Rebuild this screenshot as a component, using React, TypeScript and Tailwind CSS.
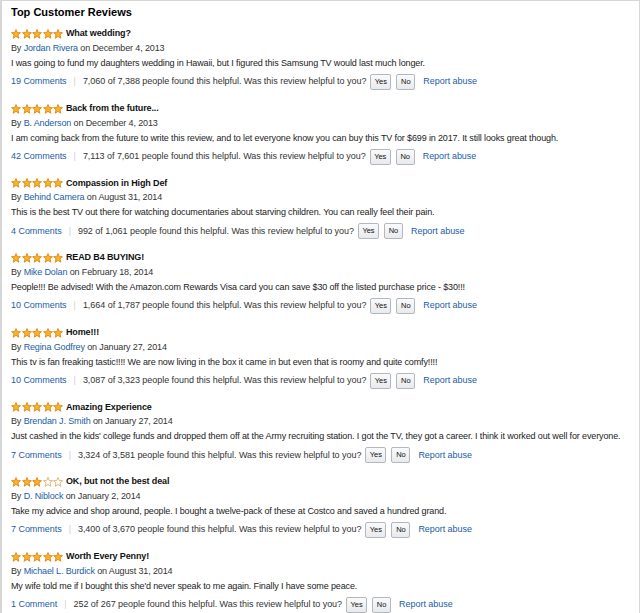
import React from "react";

const reviews = [
  {
    rating: 5,
    title: "What wedding?",
    author: "Jordan Rivera",
    date: "December 4, 2013",
    body: "I was going to fund my daughters wedding in Hawaii, but I figured this Samsung TV would last much longer.",
    comments: "19 Comments",
    helpful: "7,060 of 7,388",
  },
  {
    rating: 5,
    title: "Back from the future...",
    author: "B. Anderson",
    date: "December 4, 2013",
    body: "I am coming back from the future to write this review, and to let everyone know you can buy this TV for $699 in 2017. It still looks great though.",
    comments: "42 Comments",
    helpful: "7,113 of 7,601",
  },
  {
    rating: 5,
    title: "Compassion in High Def",
    author: "Behind Camera",
    date: "August 31, 2014",
    body: "This is the best TV out there for watching documentaries about starving children. You can really feel their pain.",
    comments: "4 Comments",
    helpful: "992 of 1,061",
  },
  {
    rating: 5,
    title: "READ B4 BUYING!",
    author: "Mike Dolan",
    date: "February 18, 2014",
    body: "People!!! Be advised! With the Amazon.com Rewards Visa card you can save $30 off the listed purchase price - $30!!!",
    comments: "10 Comments",
    helpful: "1,664 of 1,787",
  },
  {
    rating: 5,
    title: "Home!!!",
    author: "Regina Godfrey",
    date: "January 27, 2014",
    body: "This tv is fan freaking tastic!!!! We are now living in the box it came in but even that is roomy and quite comfy!!!!",
    comments: "10 Comments",
    helpful: "3,087 of 3,323",
  },
  {
    rating: 5,
    title: "Amazing Experience",
    author: "Brendan J. Smith",
    date: "January 27, 2014",
    body: "Just cashed in the kids' college funds and dropped them off at the Army recruiting station. I got the TV, they got a career. I think it worked out well for everyone.",
    comments: "7 Comments",
    helpful: "3,324 of 3,581",
  },
  {
    rating: 3,
    title: "OK, but not the best deal",
    author: "D. Niblock",
    date: "January 2, 2014",
    body: "Take my advice and shop around, people. I bought a twelve-pack of these at Costco and saved a hundred grand.",
    comments: "7 Comments",
    helpful: "3,400 of 3,670",
  },
  {
    rating: 5,
    title: "Worth Every Penny!",
    author: "Michael L. Burdick",
    date: "August 31, 2014",
    body: "My wife told me if I bought this she'd never speak to me again. Finally I have some peace.",
    comments: "1 Comment",
    helpful: "252 of 267",
  },
];

const Star = ({ filled }: { filled: boolean }) => (
  <svg width="10" height="10" viewBox="0 0 20 20" className="shrink-0">
    <polygon
      points="10,1 12.6,7 19,7.4 14,11.6 15.6,18.5 10,14.8 4.4,18.5 6,11.6 1,7.4 7.4,7"
      fill={filled ? "#fbb226" : "#ffffff"}
      stroke={filled ? "#d9820c" : "#d7a65a"}
      strokeWidth="1.6"
      strokeLinejoin="round"
    />
  </svg>
);

const Review = ({ r }: { r: (typeof reviews)[number] }) => (
  <div className="flex flex-col pb-[9.7px] tracking-[-0.13px]">
    <div className="flex h-[14px] items-center gap-[3px]">
      <div className="flex gap-[0.5px]">
        {[0, 1, 2, 3, 4].map((i) => (
          <Star key={i} filled={i < r.rating} />
        ))}
      </div>
      <span className="text-[9px] font-bold text-[#111]">{r.title}</span>
    </div>
    <div className="h-[14px] whitespace-nowrap leading-[14px] text-[9px] text-[#333]">
      By <span className="text-[#1b5da4]">{r.author}</span> on {r.date}
    </div>
    <div className="h-[16px] whitespace-nowrap leading-[16px] text-[9px] text-[#222]">{r.body}</div>
    <div className="mt-px flex h-[20px] items-center whitespace-nowrap text-[9px] tracking-[-0.04px] text-[#333]">
      <span className="text-[#1b5da4]">{r.comments}</span>
      <span className="mx-[7px] text-[#d0d0d0]">|</span>
      <span>{r.helpful} people found this helpful. Was this review helpful to you?</span>
      <button className="ml-[4px] h-[16px] w-[21px] rounded-[2px] border border-[#b4b7bc] bg-gradient-to-b from-[#f9fafb] to-[#e8eaed] text-[7.5px] leading-[14px] text-[#111]">
        Yes
      </button>
      <button className="ml-[5px] h-[16px] w-[19px] rounded-[2px] border border-[#b4b7bc] bg-gradient-to-b from-[#f9fafb] to-[#e8eaed] text-[7.5px] leading-[14px] text-[#111]">
        No
      </button>
      <span className="ml-[8px] text-[#1b5da4]">Report abuse</span>
    </div>
  </div>
);

export default function App() {
  return (
    <div
      className="h-[613px] w-[640px] overflow-hidden bg-white"
      style={{ fontFamily: '"Liberation Sans", Arial, sans-serif' }}
    >
      <div className="h-full border-l-2 border-t border-r border-[#d6d6d6] pl-[9px] pt-[3px]">
        <h2 className="mb-[7px] text-[11px] font-bold leading-[16px] text-black">Top Customer Reviews</h2>
        {reviews.map((r) => (
          <Review key={r.title} r={r} />
        ))}
      </div>
    </div>
  );
}
